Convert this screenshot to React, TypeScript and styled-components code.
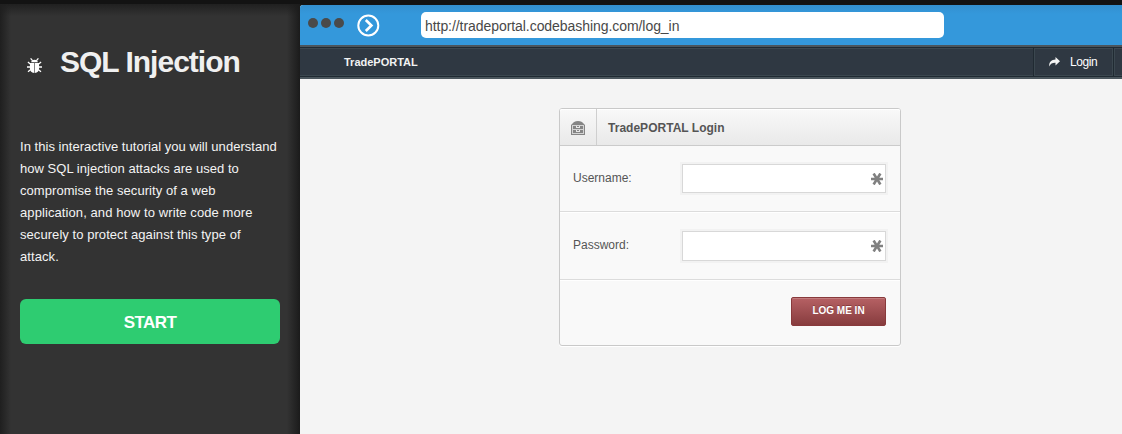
import React from "react";
import styled, { createGlobalStyle } from "styled-components";

const GlobalStyle = createGlobalStyle`
  * { box-sizing: border-box; }
  body {
    margin: 0;
    overflow: hidden;
    background: #141414;
    font-family: "Liberation Sans", Arial, sans-serif;
  }
`;

const Page = styled.div`
  display: flex;
  flex-direction: column;
  height: 434px;
`;

const TopStrip = styled.div`
  height: 4px;
  flex: none;
  background: #131313;
`;

const Columns = styled.div`
  display: flex;
  flex: 1;
  min-height: 0;
`;

const Sidebar = styled.aside`
  width: 300px;
  flex: none;
  padding: 39px 20px 0;
  background:
    linear-gradient(to right, #1f1f1f, rgba(51, 51, 51, 0) 11px),
    linear-gradient(to left, #1b1b1b, rgba(51, 51, 51, 0) 13px),
    linear-gradient(to bottom, #202020, rgba(51, 51, 51, 0) 12px),
    #333;
  color: #f4f4f4;
`;

const TitleRow = styled.div`
  display: flex;
  align-items: center;
  height: 38px;
  padding-left: 7px;
`;

const BugSvg = styled.svg`
  width: 15px;
  height: 15px;
  margin-top: 6px;
`;

const Title = styled.h1`
  margin: 0 0 0 18px;
  font-size: 30px;
  line-height: 38px;
  letter-spacing: -1px;
  white-space: nowrap;
  color: #f0f0f0;
`;

const Intro = styled.p`
  width: 262px;
  margin: 55px 0 31px;
  font-size: 13px;
  line-height: 22px;
`;

const Line = styled.span<{ $spacing: number }>`
  display: block;
  white-space: nowrap;
  letter-spacing: ${(p) => p.$spacing}px;
`;

const StartButton = styled.button`
  display: block;
  width: 260px;
  height: 45px;
  padding: 2px 0 0;
  border: 0;
  border-radius: 6px;
  background: #2ecc71;
  color: #fff;
  font: bold 17px "Liberation Sans", Arial, sans-serif;
  letter-spacing: -0.6px;
`;

const Browser = styled.main`
  display: flex;
  flex-direction: column;
  flex: 1;
  margin-top: 1px;
  border-top-left-radius: 3px;
  overflow: hidden;
  background: #f4f4f4;
`;

const AddressBar = styled.div`
  display: flex;
  flex: none;
  height: 40px;
  padding-left: 8px;
  background: linear-gradient(#338fcf, #3498db 9px);
`;

const Dots = styled.div`
  display: flex;
  gap: 3px;
  padding-top: 13px;
`;

const Dot = styled.i`
  width: 10px;
  height: 10px;
  border-radius: 50%;
  background: #4a4a4a;
`;

const GoIcon = styled.svg`
  width: 24px;
  height: 24px;
  margin: 8px 0 0 12px;
`;

const Address = styled.div`
  width: 523px;
  height: 26px;
  margin: 7px 0 0 41px;
  padding-left: 4px;
  border-radius: 5px;
  background: #fff;
  color: #484848;
  font-size: 14px;
  line-height: 29px;
  letter-spacing: -0.06px;
  white-space: nowrap;
`;

const Nav = styled.nav`
  display: flex;
  flex: none;
  justify-content: space-between;
  height: 34px;
  padding: 1px 0 1px;
  border-top: 2px solid #4b555c;
  border-bottom: 2px solid #4b565d;
  background: #2f3842;
  box-shadow: inset 0 1px #202a32, inset 0 2px #3b474f, inset 0 -1px #202a32, inset 0 -2px #3b474f;
`;

const Brand = styled.strong`
  padding-left: 44px;
  color: #f2f2f2;
  font-size: 11px;
  line-height: 28px;
`;

const LoginLink = styled.a`
  display: flex;
  align-items: center;
  width: 81px;
  margin-right: 8px;
  padding-left: 15px;
  border: solid #202a32;
  border-width: 0 1px;
  box-shadow: inset 1px 0 #3b474f, inset -1px 0 #3b474f, 1px 0 #3b474f;
  color: #fff;
  font-size: 12px;
  letter-spacing: -0.45px;
`;

const ArrowIcon = styled.svg`
  width: 11px;
  height: 10px;
  margin-right: 10px;
`;

const Content = styled.section`
  display: flex;
  justify-content: center;
  align-items: flex-start;
  flex: 1;
  padding: 29px 0 0 38px;
`;

const Card = styled.form`
  width: 342px;
  height: 238px;
  border: 1px solid #c9c9c9;
  border-radius: 3px;
  background: #f9f9f9;
  box-shadow: 0 1px #fff;
  color: #555;
`;

const CardHeader = styled.header`
  display: flex;
  height: 37px;
  border-bottom: 1px solid #cbcbcb;
  border-radius: 2px 2px 0 0;
  background: linear-gradient(#f9f9f9, #e9e9e9);
  box-shadow: inset 0 1px #fff;
`;

const IconCell = styled.div`
  display: flex;
  justify-content: center;
  align-items: center;
  width: 37px;
  padding-top: 1px;
  border-right: 1px solid #cfcfcf;
`;

const CardTitle = styled.h2`
  margin: 0;
  padding-left: 11px;
  font-size: 12px;
  line-height: 38px;
  letter-spacing: 0.02px;
`;

const Field = styled.label<{ $height: number }>`
  display: flex;
  justify-content: space-between;
  align-items: center;
  height: ${(p) => p.$height}px;
  padding: 0 14px 0 13px;
  border-bottom: 1px solid #dcdcdc;
  box-shadow: 0 1px #fff;
  font-size: 12px;
`;

const FieldName = styled.span`
  padding-bottom: 2px;
`;

const InputFrame = styled.div<{ $height: number }>`
  display: flex;
  align-items: center;
  width: 204px;
  height: ${(p) => p.$height}px;
  border: 1px solid #d8d8d8;
  background: #fff;
  box-shadow: 0 0 0 2px #f2f2f2;
  padding-right: 2px;
`;

const Input = styled.input`
  flex: 1;
  min-width: 0;
  height: 100%;
  border: 0;
  outline: 0;
  background: transparent;
`;

const CardFooter = styled.footer`
  display: flex;
  justify-content: flex-end;
  padding: 17px 14px 0 0;
`;

const Submit = styled.button`
  width: 95px;
  height: 29px;
  padding: 0 0 2px;
  border: 1px solid #883a3c;
  border-radius: 2px;
  background: linear-gradient(#b66164, #873c3e);
  box-shadow: inset 0 1px #c37c7e;
  color: #fff;
  font: bold 10px "Liberation Sans", Arial, sans-serif;
  text-shadow: 0 -1px #873c3e;
`;

const Bug = () => (
  <BugSvg viewBox="0 0 15 15" fill="#fff">
    <path d="M4.2 4.3C4.4 2.5 5.6 1.8 7.5 1.8S10.6 2.5 10.8 4.3Z" />
    <path d="M3 5H7.2V15C4.2 14.9 2.9 13 2.9 10.3ZM7.8 5H12L12.1 10.3C12.1 13 10.8 14.9 7.8 15Z" />
    <path d="M3.6 .4L5.6 2.6M11.4 .4L9.4 2.6M.9 4.1L3.6 6.3M14.1 4.1L11.4 6.3M0 9H3.5M15 9H11.5M1 13.7L3.8 11.4M14 13.7L11.2 11.4" stroke="#fff" strokeWidth="1.3" />
  </BugSvg>
);

const Required = () => (
  <svg width="12" height="12" viewBox="0 0 12 12" stroke="#808080" strokeWidth="2.6">
    <path d="M0 6H12M2.6 .5L9.4 11.5M9.4 .5L2.6 11.5" />
  </svg>
);

const Cabinet = () => (
  <svg width="14" height="14" viewBox="0 0 14 14">
    <path d="M0 4L3 1Q7 -1 11 1L14 4V14H0Z" fill="#858585" />
    <path d="M1.5 4.5H12.5M1.5 8.5H12.5M1.5 12.5H12.5M1.5 4V13M12.5 4V13" stroke="#d4d4d4" fill="none" />
    <path d="M5 5H9V7H5ZM5 9H9V11H5Z" fill="#e6e6e6" />
    <path d="M6 5.5H8M6 9.5H8" stroke="#858585" />
  </svg>
);

const introLines: [string, number][] = [
  ["In this interactive tutorial you will understand", 0.035],
  ["how SQL injection attacks are used to", 0.03],
  ["compromise the security of a web", 0.06],
  ["application, and how to write code more", 0.09],
  ["securely to protect against this type of", 0.06],
  ["attack.", 0.08],
];

export default function App() {
  return (
    <Page>
      <GlobalStyle />
      <TopStrip />
      <Columns>
        <Sidebar>
          <TitleRow>
            <Bug />
            <Title>SQL Injection</Title>
          </TitleRow>
          <Intro>
            {introLines.map(([text, spacing]) => (
              <Line key={text} $spacing={spacing}>{text}</Line>
            ))}
          </Intro>
          <StartButton>START</StartButton>
        </Sidebar>
        <Browser>
          <AddressBar>
            <Dots><Dot /><Dot /><Dot /></Dots>
            <GoIcon viewBox="0 0 24 24" fill="none" stroke="#fff" strokeWidth="2">
              <circle cx="12.3" cy="12.5" r="10" />
              <path d="M9.8 7L15.4 12.5L9.8 18" strokeWidth="2.6" />
            </GoIcon>
            <Address>http://tradeportal.codebashing.com/log_in</Address>
          </AddressBar>
          <Nav>
            <Brand>TradePORTAL</Brand>
            <LoginLink>
              <ArrowIcon viewBox="0 0 11 10">
                <path d="M6.5 0L11 4.2L6.5 8.4V5.8C3.5 5.7 1.5 6.4 .3 9.5C-.3 5.5 2.2 2.7 6.5 2.6Z" fill="#f4f4f4" />
              </ArrowIcon>
              Login
            </LoginLink>
          </Nav>
          <Content>
            <Card>
              <CardHeader>
                <IconCell><Cabinet /></IconCell>
                <CardTitle>TradePORTAL Login</CardTitle>
              </CardHeader>
              <Field $height={66}>
                <FieldName>Username:</FieldName>
                <InputFrame $height={29}><Input /><Required /></InputFrame>
              </Field>
              <Field $height={68}>
                <FieldName>Password:</FieldName>
                <InputFrame $height={30}><Input type="password" /><Required /></InputFrame>
              </Field>
              <CardFooter><Submit type="button">LOG ME IN</Submit></CardFooter>
            </Card>
          </Content>
        </Browser>
      </Columns>
    </Page>
  );
}
